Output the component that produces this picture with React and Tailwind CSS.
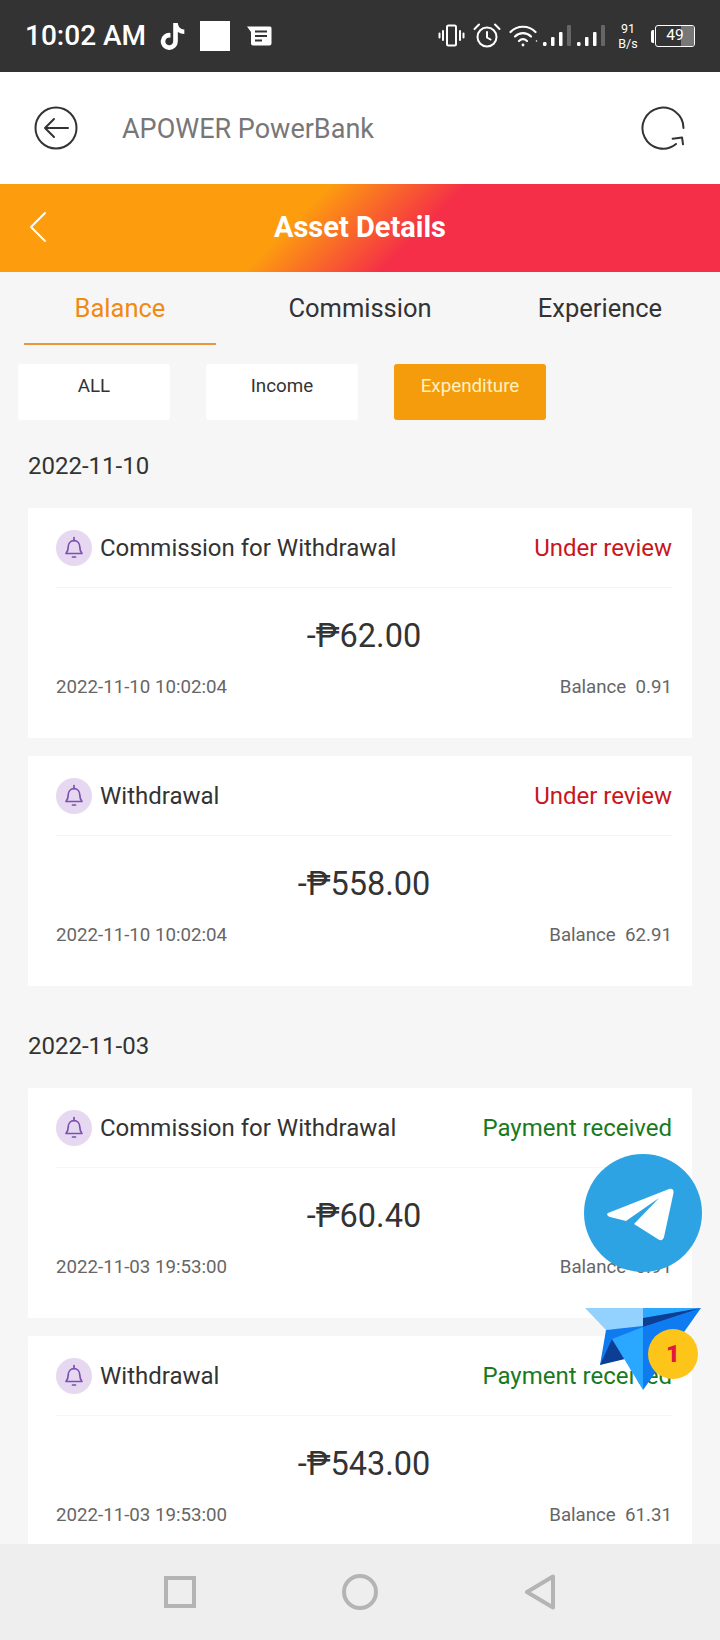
import React from "react";
import { FaTiktok } from "react-icons/fa";

function Bell() {
  return (
    <span className="flex h-9 w-9 shrink-0 items-center justify-center rounded-full bg-[#e6d8f1]">
      <svg width="22" height="24" viewBox="0 0 22 24" fill="none" stroke="#7d4fb0" strokeWidth="1.7" strokeLinejoin="round" strokeLinecap="round">
        <path d="M3 17.5c1.6-1.6 2.2-3 2.2-6.500 0-3.600 2.400-6.400 5.800-6.400s5.800 2.800 5.800 6.400c0 3.500.6 4.900 2.200 6.500z" />
        <path d="M11 1.600v3" />
        <path d="M9.500 21h3" />
      </svg>
    </span>
  );
}

function Card({ title, status, statusColor, amount, time, balance }) {
  return (
    <div className="h-[230px] shrink-0 rounded-[2px] bg-white pl-[28px] pr-[20px]">
      <div className="flex h-[80px] items-center border-b border-[#f5f5f5] pt-[1px]">
        <Bell />
        <span className="ml-[8px] flex-1 text-[24px] text-[#333]">{title}</span>
        <span className={`text-[24px] ${statusColor}`}>{status}</span>
      </div>
      <div className="mt-[24px] text-center text-[32.5px] leading-[48px] text-[#333]">{amount}</div>
      <div className="mt-[13px] flex items-center justify-between text-[18.7px] leading-[28px] text-[#666]">
        <span>{time}</span>
        <span>Balance&nbsp; {balance}</span>
      </div>
    </div>
  );
}

function StatusRight() {
  return (
    <div className="flex items-center text-white">
      <svg width="27" height="24" viewBox="0 0 27 24" fill="none" stroke="#fff" strokeWidth="2" className="mr-[8px]">
        <rect x="9" y="1.500" width="9" height="20" rx="1.500" />
        <path d="M5 7v9M1.500 9.500v4M22 7v9M25.500 9.500v4" strokeLinecap="round" />
      </svg>
      <svg width="28" height="26" viewBox="0 0 28 26" fill="none" stroke="#fff" strokeWidth="2" className="mr-[8px]" strokeLinecap="round">
        <circle cx="14" cy="14" r="9.500" />
        <path d="M14 9v5.500l3.500 2" />
        <path d="M1.500 6 6 1.500M26.500 6 22 1.500" />
      </svg>
      <svg width="30" height="24" viewBox="0 0 30 24" fill="none" stroke="#fff" strokeWidth="2.2" strokeLinecap="round" className="mr-[4px]">
        <path d="M1.500 8C8 1 20 1 26.500 8" />
        <path d="M6 12.500c4.500-4.400 11.500-4.400 16 0" />
        <path d="M10 17c2.400-2.200 5.600-2.200 8 0" />
        <circle cx="14" cy="21" r="1.400" fill="#fff" stroke="none" />
        <circle cx="27.500" cy="17" r="0.800" fill="#fff" stroke="none" />
      </svg>
      {[0, 1].map((i) => (
        <svg key={i} width="30" height="24" viewBox="0 0 30 24" className="mr-[4px]">
          <rect x="0" y="18" width="3.500" height="4" rx="1.200" fill="#fff" />
          <rect x="8" y="13" width="3.500" height="9" rx="1" fill="#fff" />
          <rect x="16" y="8" width="3.500" height="14" rx="1" fill="#fff" />
          <rect x="24" y="1" width="4" height="21" rx="1" fill="#666" />
        </svg>
      ))}
      <div className="ml-[5px] mr-[11px] flex w-[24px] flex-col items-center text-[12.5px] leading-[15px]">
        <span>91</span>
        <span>B/s</span>
      </div>
      <div className="flex items-center">
        <span className="h-[13px] w-[3px] rounded-l-[2px] bg-white" />
        <div className="relative ml-[1px] flex h-[22px] w-[40px] items-center justify-center overflow-hidden rounded-[3px] border-[1.5px] border-white">
          <span className="absolute bottom-0 right-0 top-0 w-[13px] bg-[#777]" />
          <span className="relative text-[15.5px] leading-none">49</span>
        </div>
      </div>
    </div>
  );
}

export default function App() {
  return (
    <div className="relative flex h-[1640px] w-[720px] flex-col overflow-hidden bg-[#f6f6f6] font-['Roboto',sans-serif]">
      <div className="flex h-[72px] shrink-0 items-center justify-between bg-[#333333] pl-[25px] pr-[25px]">
        <div className="flex items-center">
          <span className="text-[28px] font-medium leading-none text-white">10:02 AM</span>
          <FaTiktok className="ml-[13px] text-[27px] text-white" />
          <span className="ml-[14px] h-[30px] w-[30px] bg-white" />
          <svg width="26" height="20" viewBox="0 0 26 20" className="ml-[16px]">
            <path d="M1 .5h23a1.500 1.500 0 0 1 1.500 1.500v15.500a2 2 0 0 1-2 2H7a2 2 0 0 1-2-2V6z" fill="#fff" />
            <path d="M9 5.500h12M9 10h12M9 14.500h7" stroke="#333" strokeWidth="2" />
          </svg>
        </div>
        <StatusRight />
      </div>

      <div className="flex h-[112px] shrink-0 items-center bg-white pl-[34px] pr-[34px]">
        <svg width="44" height="44" viewBox="0 0 44 44" fill="none" stroke="#333" strokeWidth="2" strokeLinecap="round" strokeLinejoin="round">
          <circle cx="22" cy="22" r="20.500" />
          <path d="M11 22h23M20 13l-9 9 9 9" />
        </svg>
        <span className="ml-[44px] flex-1 pt-[2px] text-[27px] text-[#777]">APOWER PowerBank</span>
        <svg width="46" height="46" viewBox="0 0 46 46" fill="none" stroke="#333" strokeWidth="2" strokeLinecap="round" strokeLinejoin="round">
          <path d="M43.500 23A20.500 20.500 0 1 0 36 39" />
          <path d="M33 33h9.500v7" transform="rotate(-8 38 36)" />
        </svg>
      </div>

      <div className="relative flex h-[88px] shrink-0 items-center justify-center bg-[linear-gradient(135deg,#fd9d0e_41%,#f52f47_58%)]">
        <svg width="20" height="32" viewBox="0 0 20 32" fill="none" stroke="#fff" strokeWidth="2" strokeLinecap="round" strokeLinejoin="round" className="absolute left-[28px] top-[27px]">
          <path d="M17 2 3 16l14 14" />
        </svg>
        <span className="text-[29px] font-bold text-white">Asset Details</span>
      </div>

      <div className="flex h-[73px] shrink-0">
        {["Balance", "Commission", "Experience"].map((t, i) => (
          <div key={t} className="flex w-[240px] flex-col items-center">
            <span className={`mt-[18px] text-[25.5px] leading-[36px] ${i === 0 ? "text-[#f08a14]" : "text-[#333]"}`}>{t}</span>
            {i === 0 && <span className="mt-[17px] h-[2px] w-[192px] bg-[#e8963c]" />}
          </div>
        ))}
      </div>

      <div className="ml-[18px] mt-[19px] flex shrink-0 gap-[36px]">
        <div className="h-[56px] w-[152px] rounded-[3px] bg-white pt-[8px] text-center text-[18.8px] leading-[29px] text-[#333]">ALL</div>
        <div className="h-[56px] w-[152px] rounded-[3px] bg-white pt-[8px] text-center text-[18.8px] leading-[29px] text-[#333]">Income</div>
        <div className="h-[56px] w-[152px] rounded-[3px] bg-[#f59c0c] pt-[8px] text-center text-[18.8px] leading-[29px] text-[#fff2c0]">Expenditure</div>
      </div>

      <div className="flex min-h-0 flex-1 flex-col overflow-hidden px-[28px]">
        <div className="mt-[30px] text-[24px] leading-[32px] text-[#333]">2022-11-10</div>
        <div className="mt-[26px] flex flex-col gap-[18px]">
          <Card title="Commission for Withdrawal" status="Under review" statusColor="text-[#c8161d]" amount="-₱62.00" time="2022-11-10 10:02:04" balance="0.91" />
          <Card title="Withdrawal" status="Under review" statusColor="text-[#c8161d]" amount="-₱558.00" time="2022-11-10 10:02:04" balance="62.91" />
        </div>
        <div className="mt-[44px] text-[24px] leading-[32px] text-[#333]">2022-11-03</div>
        <div className="mt-[26px] flex flex-col gap-[18px]">
          <Card title="Commission for Withdrawal" status="Payment received" statusColor="text-[#187a1e]" amount="-₱60.40" time="2022-11-03 19:53:00" balance="0.91" />
          <Card title="Withdrawal" status="Payment received" statusColor="text-[#187a1e]" amount="-₱543.00" time="2022-11-03 19:53:00" balance="61.31" />
        </div>
      </div>

      <div className="flex h-[96px] shrink-0 items-center justify-center bg-[#eeeeee]">
        <div className="flex w-[180px] justify-center">
          <span className="h-[32px] w-[32px] border-[4px] border-[#b4b4b4]" />
        </div>
        <div className="flex w-[180px] justify-center">
          <span className="h-[36px] w-[36px] rounded-full border-[4px] border-[#b4b4b4]" />
        </div>
        <div className="flex w-[180px] justify-center">
          <svg width="32" height="36" viewBox="0 0 32 36" fill="none" stroke="#b4b4b4" strokeWidth="4" strokeLinejoin="round">
            <path d="M29 2.500v31L3 18z" />
          </svg>
        </div>
      </div>

      <svg width="118" height="118" viewBox="0 0 118 118" className="absolute left-[584px] top-[1154px]">
        <circle cx="59" cy="59" r="59" fill="#2ea3e3" />
        <path d="M24 59 85 35c3-1 5 .5 4.500 4L80 83c-.7 3-3 4-5.500 2.500L50 70l25-26-33 23-16-4c-2-.6-4-2.500-2-4z" fill="#fff" />
      </svg>

      <svg width="118" height="84" viewBox="0 0 118 84" className="absolute left-[584px] top-[1307px]">
        <path d="M1 1h58v20L22 23z" fill="#93d2ff" />
        <path d="M59 1h58L59 21z" fill="#2aa8ff" />
        <path d="M117 1 59 21v-2l-37 4-6 35z" fill="#0e7bf0" />
        <path d="M16 58 28 32l13 20z" fill="#0b3e94" />
        <path d="M28 32 59 20v63z" fill="#2aa8ff" />
        <path d="M59 20 117 1 59 83z" fill="#0e7bf0" />
        <path d="M117 1 59 11v9z" fill="#0b3e94" />
      </svg>
      <div className="absolute left-[648px] top-[1329px] flex h-[50px] w-[50px] items-center justify-center rounded-full bg-[#fdc41a] text-[24px] font-black leading-none text-[#e0173f]">1</div>
    </div>
  );
}
